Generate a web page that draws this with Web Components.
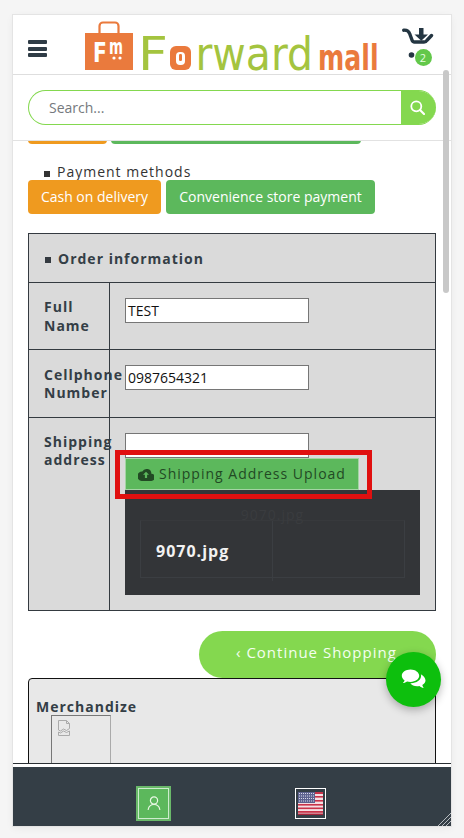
<!DOCTYPE html>
<html lang="en"><head><meta charset="utf-8"><title>Forward mall</title>
<style>html,body{margin:0;height:100%;background:#f5f5f5;overflow:hidden;font-family:"Open Sans",sans-serif}</style>
</head><body>
<fm-app>
  <fm-header slot="header"></fm-header>
  <fm-search slot="search"></fm-search>
  <fm-pay-options></fm-pay-options>
  <fm-order-info></fm-order-info>
  <fm-continue></fm-continue>
  <fm-merch></fm-merch>
  <fm-bottom slot="bottom"></fm-bottom>
</fm-app>
<script>
function def(name, html){
  customElements.define(name, class extends HTMLElement{
    constructor(){super();this.attachShadow({mode:'open'}).innerHTML=html;}
  });
}
def('fm-app',`<style>
:host{display:flex;flex-direction:column;position:relative;box-sizing:border-box;width:438px;height:811px;margin:15px 0 0 13px;background:#fff;box-shadow:0 0 0 1px #e4e4e4,0 2px 8px rgba(0,0,0,.06);overflow:hidden}
.scroll{flex:1;min-height:0;overflow:hidden;padding:0 15px}
.bar{position:absolute;left:430px;top:55px;width:6px;height:223px;border-radius:3px;background:#c8c8c8}
.chat{position:absolute;left:373px;top:637px;width:55px;height:55px;border-radius:50%;background:#0dbf0d;box-shadow:0 3px 9px rgba(0,0,0,.28);display:flex;align-items:center;justify-content:center}
</style>
<slot name="header"></slot><slot name="search"></slot>
<div class="scroll"><slot></slot></div>
<slot name="bottom"></slot>
<div class="bar"></div>
<div class="chat"><svg width="26" height="21" viewBox="0 0 26 21"><path fill="#fff" d="M9.500.5C4.600.5.800 3.300.800 6.800c0 1.900 1.100 3.500 2.800 4.700-.3 1-.9 1.800-1.700 2.600 1.500 0 3-.6 4.200-1.500.9.200 2 .3 3.400.3 4.900 0 8.700-2.800 8.700-6.100S14.400.5 9.500.5z"/><path fill="#fff" d="M19.800 5.200c.2.500.3 1 .3 1.600 0 4.100-4.500 7.400-10 7.400h-.8c1.300 1.800 3.900 3 6.800 3 .8 0 1.600-.1 2.300-.3 1.200.9 2.600 1.900 4.300 2-.6-.8-1.200-1.800-1.400-2.800 2-1.100 3.200-2.700 3.200-4.500 0-2.700-2-5-4.700-6.400z"/></svg></div>`);
def('fm-header',`<style>
:host{display:flex;align-items:flex-start;box-sizing:border-box;height:60px;border-bottom:1px solid #dedede;padding:0 15px;position:relative}
.m{width:21px;height:17px;display:flex;flex-direction:column;justify-content:space-between;margin-top:25px}
.m i{display:block;height:4px;border-radius:1px;background:#2f3c46}
svg.l{display:block;margin-left:37px;overflow:visible}
.c{margin:12px 0 0 23px;width:34px;height:38px;position:relative}
.c svg{display:block}
.b{position:absolute;left:12.500px;top:21.500px;width:17px;height:17px;border-radius:50%;background:#63c84a;color:#e6ffe0;font:11px/17px "Open Sans",sans-serif;text-align:center}
</style>
<div class="m"><i></i><i></i><i></i></div>
<svg class="l" width="295" height="59" viewBox="0 0 295 59">
<rect x="1" y="18" width="48" height="37" fill="#ea7a3d"/>
<path d="M15.500 18v-7a3.500 3.500 0 0 1 3.500-3.500h12a3.500 3.500 0 0 1 3.500 3.500v7" fill="none" stroke="#ea7a3d" stroke-width="2.200"/>
<text transform="translate(9 47) scale(.78 1)" font-family="DejaVu Sans" font-weight="700" font-size="26" fill="#fff">F</text>
<text transform="translate(25 39) scale(.64 1)" font-family="DejaVu Sans" font-weight="700" font-size="21" fill="#fff">m</text>
<circle cx="30" cy="43" r="1.600" fill="#fff"/><circle cx="36" cy="43" r="1.600" fill="#fff"/>
<text transform="translate(54 55) scale(1.13 1)" font-family="DejaVu Sans" font-size="46" fill="#a4c43f">F</text>
<rect x="86" y="31" width="21" height="24" rx="6" fill="#ea7a3d"/>
<text transform="translate(87 52) scale(1 1)" font-family="DejaVu Sans" font-weight="700" font-size="30" fill="#ea7a3d">o</text>
<rect x="92" y="37" width="9" height="13" rx="4" fill="#fff"/><rect x="95" y="39" width="3" height="7" rx="1.200" fill="#ea7a3d"/>
<text transform="translate(111.500 55) scale(.89 1)" font-family="DejaVu Sans" font-size="46" fill="#a4c43f">rward</text>
<text transform="translate(234 55) scale(.7 1)" font-family="DejaVu Sans" font-weight="700" font-size="36" fill="#ea7a3d">mall</text>
</svg>
<div class="c"><svg width="34" height="34" viewBox="0 0 34 34"><path d="M1.700 3.200c3-.3 5 .7 6 3.500L10 13c.5 1.500 1 2 2.500 2H22c1.500 0 2.300-.5 3-1.800L29.500 8.500" fill="none" stroke="#243642" stroke-width="3.400" stroke-linecap="round"/><path d="M17 1h4.500v6.500H26l-6.750 6.300L12.500 7.500H17z" fill="#243642"/><circle cx="9.500" cy="28" r="2.800" fill="#243642"/></svg><div class="b">2</div></div>`);
def('fm-search',`<style>
:host{display:flex;align-items:center;box-sizing:border-box;height:66px;padding:0 15px;border-bottom:1px solid #e2e2e2;background:#fff}
.w{flex:1;display:flex;height:35px;box-sizing:border-box;border-radius:18px;overflow:hidden;border:1px solid #84d84f;border-right:0}
.t{flex:1;padding-left:20px;font:14px/33px "Open Sans",sans-serif;color:#75797d}
.g{width:35px;background:#84d84f;display:flex;align-items:center;justify-content:center;padding-right:3px;box-sizing:border-box}
</style>
<div class="w"><div class="t">Search...</div><div class="g"><svg width="15" height="15" viewBox="0 0 15 15" fill="none" stroke="#fff" stroke-width="1.800"><circle cx="6.300" cy="6.300" r="5"/><path d="M10 10l4 4" stroke-linecap="round" stroke-width="2.200"/></svg></div></div>`);
def('fm-pay-options',`<style>
:host{display:block;font-family:"Open Sans",sans-serif}
.r{display:flex;gap:5px}
.clip{margin-top:-31px;gap:4px}
.b{box-sizing:border-box;height:34px;border-radius:4px;color:#fff;font-size:14px;line-height:34px;text-align:center}
.o{background:#ef9a1f}.g{background:#5cb85c}
h4{margin:20px 0 0;padding-left:16px;font-weight:400;font-size:14px;line-height:16px;letter-spacing:1px;color:#333;height:16px;display:flex;align-items:center;gap:7px}
h4 i{display:block;width:6px;height:6px;background:#333;margin-top:3px}
</style>
<div class="r clip"><div class="b o" style="width:79px"></div><div class="b g" style="width:250px"></div></div>
<h4><i></i>Payment methods</h4>
<div class="r"><div class="b o" style="width:133px">Cash on delivery</div><div class="b g" style="width:209px">Convenience store payment</div></div>`);
def('fm-order-info',`<style>
:host{display:block;margin-top:19px;box-sizing:border-box;background:#dadada;border:1px solid #343a40;font-family:"Open Sans",sans-serif;color:#343e46;position:relative}
.h{height:49px;box-sizing:border-box;border-bottom:1px solid #343a40;padding-left:16px;display:flex;align-items:center;gap:7px;font-size:14px;font-weight:700;letter-spacing:1px}
.h i{display:block;width:6px;height:6px;background:#343a40;margin-top:3px}
.row{display:grid;grid-template-columns:81px 1fr;border-bottom:1px solid #343a40}
.la{border-right:1px solid #343a40;padding:14px 0 0 15px;font-size:14px;font-weight:700;letter-spacing:1px;line-height:19px;white-space:nowrap;box-sizing:border-box}
.in{padding:15px 0 0 15px;min-width:0}
.box{box-sizing:border-box;width:184px;height:25px;background:#fff;border:1px solid #767676;font:14px/23px "Open Sans",sans-serif;color:#111;padding-left:2px}
.up{box-sizing:border-box;width:232px;height:30px;margin:1px 0 1px 1px;background:#5cb85c;box-shadow:0 0 0 1px #a4d4a4;color:#224a24;font-size:14px;line-height:30px;letter-spacing:1px;display:flex;align-items:center;gap:5px;padding-left:12px;position:relative;z-index:1}
.dark{width:295px;height:105px;background:#333538;box-sizing:border-box;padding:15px;position:relative}
.ghost{font-size:14px;line-height:20px;letter-spacing:1px;color:#3a3c3f;text-align:center;margin-bottom:-5px}
.tb{display:grid;grid-template-columns:132px 1fr;height:58px;box-sizing:border-box;border:1px solid #3b3e42;border-top-color:#37393c}
.tb div:first-child{border-right:1px solid #3b3e42;padding-left:15px;font-size:16px;font-weight:700;color:#f2f2f2;line-height:60px;letter-spacing:1px}
.red{position:absolute;left:86px;top:216px;width:257px;height:49px;box-sizing:border-box;border:5px solid #e01010;z-index:2}
</style>
<div class="h"><i></i>Order information</div>
<div class="row" style="height:66px"><div class="la">Full<br>Name</div><div class="in"><div class="box">TEST</div></div></div>
<div class="row" style="height:67px"><div class="la" style="padding-top:16px;line-height:18px">Cellphone<br>Number</div><div class="in"><div class="box">0987654321</div></div></div>
<div class="row" style="height:192px;border-bottom:0"><div class="la" style="padding-top:15px;line-height:18px">Shipping<br>address</div><div class="in"><div class="box"></div>
<div class="up"><svg width="16" height="13" viewBox="0 0 16 13"><path fill="#224a24" d="M13.400 5.700A4.800 4.800 0 0 0 4.300 3.600 3.700 3.700 0 0 0 3.600 12.900h9.300a3.500 3.500 0 0 0 .5-7.200z"/><path fill="#5cb85c" d="M8 3.800l3 3H9.100v3.300H6.900V6.800H5z"/></svg>Shipping Address Upload</div>
<div class="dark"><div class="ghost">9070.jpg</div><div class="tb"><div>9070.jpg</div><div></div></div></div></div></div>
<div class="red"></div>`);
def('fm-continue',`<style>
:host{display:flex;justify-content:flex-end;margin-top:20px}
div{box-sizing:border-box;width:237px;height:47px;border-radius:24px;background:#84d84f;color:#f4fff0;font:15px/42px "Open Sans",sans-serif;letter-spacing:1px;padding-left:37px}
</style><div>‹ Continue Shopping</div>`);
def('fm-merch',`<style>
:host{display:block;box-sizing:border-box;height:140px;background:#e8e8e8;border:1px solid #111;border-radius:4px 4px 0 0;padding:18px 0 0 7px;font-family:"Open Sans",sans-serif}
h5{margin:0;font-size:14px;line-height:20px;font-weight:700;letter-spacing:1px;color:#343e46}
.im{margin:-2px 0 0 15px;width:60px;height:100px;box-sizing:border-box;border:1px solid #777;border-right-color:#aaa;padding:4px 5px}
svg{display:block}
</style><h5>Merchandize</h5><div class="im"><svg width="14" height="16" viewBox="0 0 14 16" fill="none" stroke="#aaa"><path d="M1.500 .500h8l3 3v5l-3 2-3-1.500-3 2-2-1z"/><path d="M9.500 .500v3h3"/><path d="M1.500 12v3.500h11V11l-3 1.500-3-1.500-3 2z"/></svg></div>`);
def('fm-bottom',`<style>
:host{display:flex;align-items:center;box-sizing:border-box;height:62px;padding:13px 0 0 123px;background:#343e46;border-top:3px solid #fff;box-shadow:0 -1px 0 #2a2f33;position:relative;flex:none}
.u{box-sizing:border-box;width:35px;height:35px;background:#5cb85c;border:2px solid #6ab96a;box-shadow:inset 0 0 0 1px #cdeccd;display:flex;align-items:center;justify-content:center}
.f{box-sizing:border-box;width:31px;height:31px;margin-left:124px;border:1px solid #fff;background:#343e46;padding:3px 2px}
.f svg{display:block}
.grip{position:absolute;right:0;bottom:0}
</style>
<div class="u"><svg width="14" height="14" viewBox="0 0 14 14" fill="none" stroke="#eaf8e4" stroke-width="1.200"><circle cx="7" cy="4.500" r="3.600"/><path d="M1.200 13.500c.5-3 2.500-5 5.800-5s5.300 2 5.800 5" stroke-linecap="round"/></svg></div>
<div class="f"><svg width="25" height="23" viewBox="0 0 25 23"><rect width="25" height="23" fill="#f4dfe2"/><g fill="#c8334a"><rect y="0" width="25" height="2"/><rect y="4" width="25" height="1.600"/><rect y="8" width="25" height="1.600"/><rect y="12" width="25" height="1.600"/><rect y="15.500" width="25" height="1.600"/><rect y="19" width="25" height="1.800"/></g><rect y="21.500" width="25" height="1.500" fill="#a8243a"/><rect x="0" y="0" width="17" height="11" fill="#5d628f"/><path d="M1 1.500h15M1 4h15M1 6.500h15M1 9h15" stroke="#d8daea" stroke-width="1" stroke-dasharray="1 1"/></svg></div>
<svg class="grip" width="13" height="13" viewBox="0 0 13 13" stroke="#c5cacd" stroke-width=".9"><path d="M0 13L13 0M4 13L13 4M8 13L13 8"/></svg>`);
</script>
</body></html>
